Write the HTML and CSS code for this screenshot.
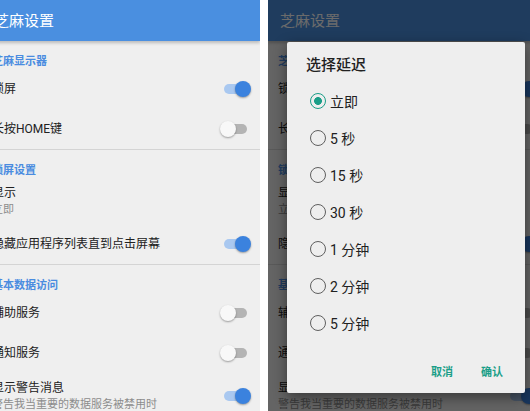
FILE: index.html
```html
<!DOCTYPE html>
<html lang="zh-CN">

<head>
  <meta charset="UTF-8">
  <meta name="viewport" content="width=device-width, initial-scale=1.0">
  <title>芝麻设置</title>
  <link rel="stylesheet" href="styles.css">
</head>

<body>
  <div class="stage">
    <!-- plain settings screen -->
    <div class="phone phone-left">
      <div class="screen">
        <header class="toolbar">芝麻设置</header>

        <section class="group">
          <h2 class="group-title">芝麻显示器</h2>
          <div class="row">
            <span class="row-title">锁屏</span>
            <span class="switch on"></span>
          </div>
          <div class="row">
            <span class="row-title">长按HOME键</span>
            <span class="switch"></span>
          </div>
        </section>

        <section class="group">
          <h2 class="group-title">锁屏设置</h2>
          <div class="row row-double">
            <div class="row-text">
              <span class="row-title">显示</span>
              <span class="row-sub">立即</span>
            </div>
          </div>
          <div class="row">
            <span class="row-title">隐藏应用程序列表直到点击屏幕</span>
            <span class="switch on"></span>
          </div>
        </section>

        <section class="group">
          <h2 class="group-title">基本数据访问</h2>
          <div class="row">
            <span class="row-title">辅助服务</span>
            <span class="switch"></span>
          </div>
          <div class="row">
            <span class="row-title">通知服务</span>
            <span class="switch"></span>
          </div>
          <div class="row row-double">
            <div class="row-text">
              <span class="row-title">显示警告消息</span>
              <span class="row-sub">警告我当重要的数据服务被禁用时</span>
            </div>
            <span class="switch on"></span>
          </div>
        </section>
      </div>
    </div>

    <!-- same screen with the delay dialog open -->
    <div class="phone phone-right">
      <div class="screen">
        <header class="toolbar">芝麻设置</header>

        <section class="group">
          <h2 class="group-title">芝麻显示器</h2>
          <div class="row">
            <span class="row-title">锁屏</span>
            <span class="switch on"></span>
          </div>
          <div class="row">
            <span class="row-title">长按HOME键</span>
            <span class="switch"></span>
          </div>
        </section>

        <section class="group">
          <h2 class="group-title">锁屏设置</h2>
          <div class="row row-double">
            <div class="row-text">
              <span class="row-title">显示</span>
              <span class="row-sub">立即</span>
            </div>
          </div>
          <div class="row">
            <span class="row-title">隐藏应用程序列表直到点击屏幕</span>
            <span class="switch on"></span>
          </div>
        </section>

        <section class="group">
          <h2 class="group-title">基本数据访问</h2>
          <div class="row">
            <span class="row-title">辅助服务</span>
            <span class="switch"></span>
          </div>
          <div class="row">
            <span class="row-title">通知服务</span>
            <span class="switch"></span>
          </div>
          <div class="row row-double">
            <div class="row-text">
              <span class="row-title">显示警告消息</span>
              <span class="row-sub">警告我当重要的数据服务被禁用时</span>
            </div>
            <span class="switch on"></span>
          </div>
        </section>
      </div>

      <div class="scrim"></div>

      <div class="dialog">
        <h3 class="dialog-title">选择延迟</h3>
        <ul class="choices">
          <li class="choice"><span class="radio checked"></span>立即</li>
          <li class="choice"><span class="radio"></span>5 秒</li>
          <li class="choice"><span class="radio"></span>15 秒</li>
          <li class="choice"><span class="radio"></span>30 秒</li>
          <li class="choice"><span class="radio"></span>1 分钟</li>
          <li class="choice"><span class="radio"></span>2 分钟</li>
          <li class="choice"><span class="radio"></span>5 分钟</li>
        </ul>
        <div class="dialog-actions">
          <button type="button" class="action">取消</button>
          <button type="button" class="action">确认</button>
        </div>
      </div>
    </div>
  </div>
</body>

</html>
```

FILE: styles.css
```css
body {
  margin: 0;
  padding: 0;
  background: #fff;
  font-family: Roboto, "Noto Sans CJK SC", sans-serif;
  color: #212121;
}

.stage {
  display: flex;
  gap: 8px;
  height: 411px;
  overflow: hidden;
}

.phone {
  position: relative;
  height: 411px;
  overflow: hidden;
  background: #efefef;
}

.phone-left {
  width: 260px;
}

.phone-right {
  width: 262px;
}

.screen {
  width: 278px;
  background: #efefef;
}

.phone-left .screen {
  margin-left: -18px; /* screenshot is cropped on the left */
}

.toolbar {
  position: relative;
  z-index: 1;
  box-sizing: border-box;
  height: 41px;
  display: flex;
  align-items: center;
  padding: 0 12px 3px;
  background-color: #4a8fe0;
  color: #fff;
  font-size: 15px;
  box-shadow: 0 2px 3px rgba(0, 0, 0, 0.22);
}

.group + .group {
  border-top: 1px solid #d4d4d4;
}

.group-title {
  margin: 0;
  padding: 13px 10px 0;
  font-size: 11px;
  line-height: 15px;
  font-weight: bold;
  color: #4a8ce0;
}

.row {
  box-sizing: border-box;
  height: 40px;
  display: flex;
  align-items: center;
  justify-content: space-between;
  padding: 0 9px 0 10px;
}

.row-double {
  height: auto;
  padding-top: 6px;
  padding-bottom: 6px;
}

.row-text {
  display: flex;
  flex-direction: column;
}

.row-title {
  font-size: 12px;
  line-height: 18px;
  color: #212121;
}

.row-sub {
  font-size: 11px;
  line-height: 16px;
  color: #8c8c8c;
}

/* toggle */
.switch {
  position: relative;
  flex: none;
  width: 31px;
  height: 16px;
}

.switch::before {
  content: "";
  position: absolute;
  left: 4px;
  right: 4px;
  top: 3px;
  height: 10px;
  border-radius: 5px;
  background: #b4b4b4;
}

.switch::after {
  content: "";
  position: absolute;
  left: 0;
  top: 0;
  width: 16px;
  height: 16px;
  border-radius: 50%;
  background: #f8f8f8;
  box-shadow: 0 1px 2px rgba(0, 0, 0, 0.35);
}

.switch.on::before {
  background: #a9c8f0;
}

.switch.on::after {
  left: auto;
  right: 0;
  background: #3b82de;
}

/* dialog */
.scrim {
  position: absolute;
  inset: 0;
  z-index: 2;
  background: rgba(0, 0, 0, 0.58);
}

.dialog {
  position: absolute;
  z-index: 3;
  left: 19px;
  top: 42px;
  width: 238px;
  height: 351px;
  box-sizing: border-box;
  display: flex;
  flex-direction: column;
  background: #eeeeee;
  border-radius: 2px;
  box-shadow: 0 4px 14px rgba(0, 0, 0, 0.45);
}

.dialog-title {
  margin: 0;
  padding: 15px 19px 0;
  font-size: 15px;
  line-height: 16px;
  font-weight: 500;
  color: #212121;
}

.choices {
  list-style: none;
  margin: 9px 0 0;
  padding: 0;
}

.choice {
  height: 37px;
  display: flex;
  align-items: center;
  padding-left: 23px;
  font-size: 14px;
  color: #212121;
}

.radio {
  box-sizing: border-box;
  width: 16px;
  height: 16px;
  margin-right: 4px;
  border: 1.6px solid #5f5f5f;
  border-radius: 50%;
}

.radio.checked {
  border-color: #1a9e88;
  background: radial-gradient(circle, #1a9e88 0 3.6px, transparent 4.2px);
}

.dialog-actions {
  margin-top: auto;
  display: flex;
  justify-content: flex-end;
  gap: 28px;
  padding: 0 22px 12px;
}

.action {
  padding: 0;
  border: 0;
  background: none;
  font-family: inherit;
  font-size: 11px;
  line-height: 16px;
  font-weight: bold;
  color: #1a9e88;
}
```
